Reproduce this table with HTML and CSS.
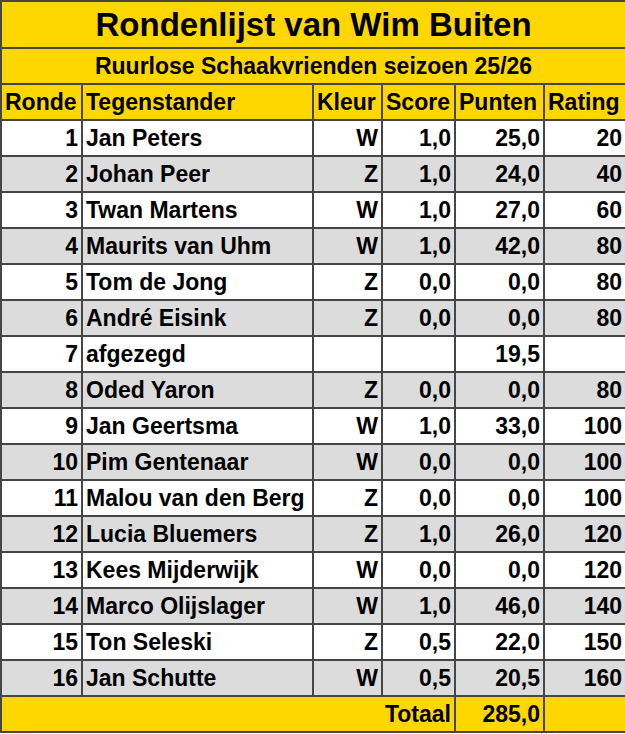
FILE: index.html
```html
<!DOCTYPE html>
<html>
<head>
<meta charset="utf-8">
<link rel="stylesheet" href="styles.css">
</head>
<body>
<table class="rl">
  <colgroup>
    <col class="c-ronde"><col class="c-teg"><col class="c-kleur"><col class="c-score"><col class="c-punten"><col class="c-rating">
  </colgroup>
  <tr class="title"><td colspan="6">Rondenlijst van Wim Buiten</td></tr>
  <tr class="sub"><td colspan="6">Ruurlose Schaakvrienden seizoen 25/26</td></tr>
  <tr class="head"><td>Ronde</td><td>Tegenstander</td><td>Kleur</td><td>Score</td><td>Punten</td><td>Rating</td></tr>
  <tr><td class="r">1</td><td>Jan Peters</td><td class="r">W</td><td class="r">1,0</td><td class="r">25,0</td><td class="r">20</td></tr>
  <tr class="alt"><td class="r">2</td><td>Johan Peer</td><td class="r">Z</td><td class="r">1,0</td><td class="r">24,0</td><td class="r">40</td></tr>
  <tr><td class="r">3</td><td>Twan Martens</td><td class="r">W</td><td class="r">1,0</td><td class="r">27,0</td><td class="r">60</td></tr>
  <tr class="alt"><td class="r">4</td><td>Maurits van Uhm</td><td class="r">W</td><td class="r">1,0</td><td class="r">42,0</td><td class="r">80</td></tr>
  <tr><td class="r">5</td><td>Tom de Jong</td><td class="r">Z</td><td class="r">0,0</td><td class="r">0,0</td><td class="r">80</td></tr>
  <tr class="alt"><td class="r">6</td><td>André Eisink</td><td class="r">Z</td><td class="r">0,0</td><td class="r">0,0</td><td class="r">80</td></tr>
  <tr><td class="r">7</td><td>afgezegd</td><td class="r"></td><td class="r"></td><td class="r">19,5</td><td class="r"></td></tr>
  <tr class="alt"><td class="r">8</td><td>Oded Yaron</td><td class="r">Z</td><td class="r">0,0</td><td class="r">0,0</td><td class="r">80</td></tr>
  <tr><td class="r">9</td><td>Jan Geertsma</td><td class="r">W</td><td class="r">1,0</td><td class="r">33,0</td><td class="r">100</td></tr>
  <tr class="alt"><td class="r">10</td><td>Pim Gentenaar</td><td class="r">W</td><td class="r">0,0</td><td class="r">0,0</td><td class="r">100</td></tr>
  <tr><td class="r">11</td><td>Malou van den Berg</td><td class="r">Z</td><td class="r">0,0</td><td class="r">0,0</td><td class="r">100</td></tr>
  <tr class="alt"><td class="r">12</td><td>Lucia Bluemers</td><td class="r">Z</td><td class="r">1,0</td><td class="r">26,0</td><td class="r">120</td></tr>
  <tr><td class="r">13</td><td>Kees Mijderwijk</td><td class="r">W</td><td class="r">0,0</td><td class="r">0,0</td><td class="r">120</td></tr>
  <tr class="alt"><td class="r">14</td><td>Marco Olijslager</td><td class="r">W</td><td class="r">1,0</td><td class="r">46,0</td><td class="r">140</td></tr>
  <tr><td class="r">15</td><td>Ton Seleski</td><td class="r">Z</td><td class="r">0,5</td><td class="r">22,0</td><td class="r">150</td></tr>
  <tr class="alt"><td class="r">16</td><td>Jan Schutte</td><td class="r">W</td><td class="r">0,5</td><td class="r">20,5</td><td class="r">160</td></tr>
  <tr class="total"><td colspan="4" class="r">Totaal</td><td class="r">285,0</td><td></td></tr>
</table>
</body>
</html>
```
FILE: styles.css
```css
html, body {
  margin: 0;
  padding: 0;
  background: #ffffff;
}
.rl {
  border-collapse: collapse;
  table-layout: fixed;
  width: 625px;
  font-family: "Liberation Sans", Arial, sans-serif;
  font-weight: bold;
  font-size: 23px;
  color: #000;
}
.c-ronde { width: 81px; }
.c-teg { width: 231px; }
.c-kleur { width: 69px; }
.c-score { width: 73px; }
.c-punten { width: 89px; }
.c-rating { width: 82px; }
.rl td {
  border: 2px solid #464646;
  height: 34px;
  padding: 0 3px;
  white-space: nowrap;
  overflow: hidden;
  line-height: 26px;
}
.rl td.r { text-align: right; }
.title td {
  background: #ffd700;
  text-align: center;
  font-size: 33px;
  height: 45px;
  line-height: 36px;
}
.sub td {
  background: #ffd700;
  text-align: center;
  font-size: 23px;
}
.head td {
  background: #ffd700;
  text-align: left;
}
.alt td { background: #dcdcdc; }
.total td { background: #ffd700; }
```
